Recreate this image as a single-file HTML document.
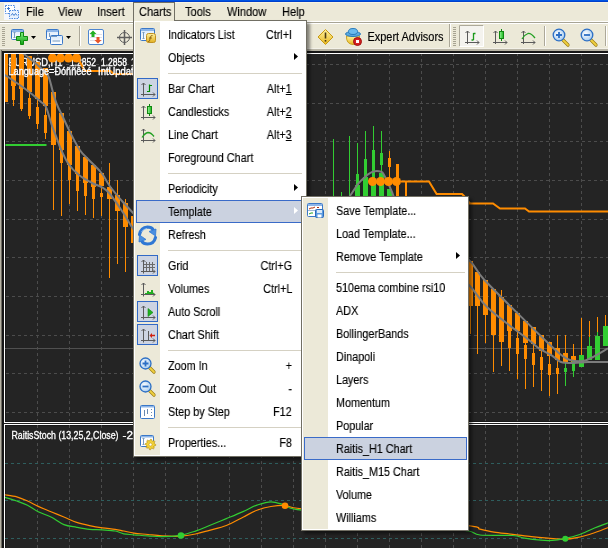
<!DOCTYPE html>
<html><head><meta charset="utf-8">
<style>
*{margin:0;padding:0;box-sizing:border-box}
html,body{width:608px;height:548px;overflow:hidden;background:#ECE9D8;font-family:"Liberation Sans",sans-serif;font-size:11px;color:#000}
.abs{position:absolute}
#chart{position:absolute;left:0;top:0;will-change:transform}
.abs svg, svg.abs{will-change:transform}
.mi{position:absolute;white-space:nowrap;line-height:13px;font-size:12px;-webkit-text-stroke:0.15px #000;transform:scaleX(0.92);transform-origin:0 0;will-change:transform}
.menu{position:absolute;background:#fff;border:1px solid #716F64;box-shadow:3px 3px 3px rgba(0,0,0,0.45)}
.menu .inner{position:absolute;left:0;top:0;right:0;bottom:0;border:1px solid #fff}
.strip{position:absolute;background:#ECE9D8}
.it{position:absolute;white-space:nowrap;line-height:13px;font-size:12px;-webkit-text-stroke:0.15px #000;transform:scaleX(0.9);transform-origin:0 0;will-change:transform}
.sc{position:absolute;white-space:nowrap;line-height:13px;text-align:right;font-size:12px;-webkit-text-stroke:0.15px #000;transform:scaleX(0.9);transform-origin:100% 0;will-change:transform}
.sep{position:absolute;height:1px;background:#D5D1C3}
.hl{position:absolute;background:#CBD2E0;border:1px solid #3A6BC8}
</style></head><body>
<svg id="chart" width="608" height="548">
<rect x="0" y="48" width="608" height="500" fill="#B6B2A3"/>
<rect x="1" y="50" width="1" height="498" fill="#6E6B62"/>
<rect x="2" y="51" width="606" height="497" fill="#161616"/>
<rect x="4" y="53" width="604" height="370" fill="#fff"/>
<rect x="5" y="54" width="603" height="368" fill="#181818"/>
<rect x="6" y="54" width="602" height="367" fill="#242424"/>
<rect x="4" y="423" width="604" height="1" fill="#1E1E1E"/>
<rect x="4" y="424" width="604" height="124" fill="#fff"/>
<rect x="5" y="425" width="603" height="123" fill="#181818"/>
<rect x="6" y="426" width="602" height="122" fill="#242424"/>
<defs><clipPath id="cm"><rect x="5" y="54" width="603" height="367"/></clipPath><clipPath id="ci"><rect x="5" y="425" width="603" height="123"/></clipPath></defs>
<g clip-path="url(#cm)"><line x1="37.5" y1="54" x2="37.5" y2="421" stroke="#4C4C4C" stroke-width="1" stroke-dasharray="3 3" stroke-dashoffset="1"/><line x1="69.5" y1="54" x2="69.5" y2="421" stroke="#4C4C4C" stroke-width="1" stroke-dasharray="3 3" stroke-dashoffset="1"/><line x1="101.5" y1="54" x2="101.5" y2="421" stroke="#4C4C4C" stroke-width="1" stroke-dasharray="3 3" stroke-dashoffset="1"/><line x1="133.5" y1="54" x2="133.5" y2="421" stroke="#4C4C4C" stroke-width="1" stroke-dasharray="3 3" stroke-dashoffset="1"/><line x1="165.5" y1="54" x2="165.5" y2="421" stroke="#4C4C4C" stroke-width="1" stroke-dasharray="3 3" stroke-dashoffset="1"/><line x1="197.5" y1="54" x2="197.5" y2="421" stroke="#4C4C4C" stroke-width="1" stroke-dasharray="3 3" stroke-dashoffset="1"/><line x1="229.5" y1="54" x2="229.5" y2="421" stroke="#4C4C4C" stroke-width="1" stroke-dasharray="3 3" stroke-dashoffset="1"/><line x1="261.5" y1="54" x2="261.5" y2="421" stroke="#4C4C4C" stroke-width="1" stroke-dasharray="3 3" stroke-dashoffset="1"/><line x1="293.5" y1="54" x2="293.5" y2="421" stroke="#4C4C4C" stroke-width="1" stroke-dasharray="3 3" stroke-dashoffset="1"/><line x1="325.5" y1="54" x2="325.5" y2="421" stroke="#4C4C4C" stroke-width="1" stroke-dasharray="3 3" stroke-dashoffset="1"/><line x1="357.5" y1="54" x2="357.5" y2="421" stroke="#4C4C4C" stroke-width="1" stroke-dasharray="3 3" stroke-dashoffset="1"/><line x1="389.5" y1="54" x2="389.5" y2="421" stroke="#4C4C4C" stroke-width="1" stroke-dasharray="3 3" stroke-dashoffset="1"/><line x1="421.5" y1="54" x2="421.5" y2="421" stroke="#4C4C4C" stroke-width="1" stroke-dasharray="3 3" stroke-dashoffset="1"/><line x1="453.5" y1="54" x2="453.5" y2="421" stroke="#4C4C4C" stroke-width="1" stroke-dasharray="3 3" stroke-dashoffset="1"/><line x1="485.5" y1="54" x2="485.5" y2="421" stroke="#4C4C4C" stroke-width="1" stroke-dasharray="3 3" stroke-dashoffset="1"/><line x1="517.5" y1="54" x2="517.5" y2="421" stroke="#4C4C4C" stroke-width="1" stroke-dasharray="3 3" stroke-dashoffset="1"/><line x1="549.5" y1="54" x2="549.5" y2="421" stroke="#4C4C4C" stroke-width="1" stroke-dasharray="3 3" stroke-dashoffset="1"/><line x1="581.5" y1="54" x2="581.5" y2="421" stroke="#4C4C4C" stroke-width="1" stroke-dasharray="3 3" stroke-dashoffset="1"/><line x1="5" y1="64.5" x2="608" y2="64.5" stroke="#4C4C4C" stroke-width="1" stroke-dasharray="3 3" stroke-dashoffset="5"/><line x1="5" y1="103.5" x2="608" y2="103.5" stroke="#4C4C4C" stroke-width="1" stroke-dasharray="3 3" stroke-dashoffset="5"/><line x1="5" y1="141.5" x2="608" y2="141.5" stroke="#4C4C4C" stroke-width="1" stroke-dasharray="3 3" stroke-dashoffset="5"/><line x1="5" y1="180.5" x2="608" y2="180.5" stroke="#4C4C4C" stroke-width="1" stroke-dasharray="3 3" stroke-dashoffset="5"/><line x1="5" y1="219.5" x2="608" y2="219.5" stroke="#4C4C4C" stroke-width="1" stroke-dasharray="3 3" stroke-dashoffset="5"/><line x1="5" y1="257.5" x2="608" y2="257.5" stroke="#4C4C4C" stroke-width="1" stroke-dasharray="3 3" stroke-dashoffset="5"/><line x1="5" y1="296.5" x2="608" y2="296.5" stroke="#4C4C4C" stroke-width="1" stroke-dasharray="3 3" stroke-dashoffset="5"/><line x1="5" y1="335.5" x2="608" y2="335.5" stroke="#4C4C4C" stroke-width="1" stroke-dasharray="3 3" stroke-dashoffset="5"/><line x1="5" y1="373.5" x2="608" y2="373.5" stroke="#4C4C4C" stroke-width="1" stroke-dasharray="3 3" stroke-dashoffset="5"/><line x1="5" y1="412.5" x2="608" y2="412.5" stroke="#4C4C4C" stroke-width="1" stroke-dasharray="3 3" stroke-dashoffset="5"/><line x1="5" y1="348.5" x2="608" y2="348.5" stroke="#505050" stroke-width="1"/><text x="8.5" y="66" textLength="54" fill="#fff" stroke="#fff" stroke-width="0.35" font-family="Liberation Sans" font-size="10" lengthAdjust="spacingAndGlyphs">EURUSD,H1</text><text x="70" y="66" textLength="26" fill="#fff" stroke="#fff" stroke-width="0.35" font-family="Liberation Sans" font-size="10" lengthAdjust="spacingAndGlyphs">1.2852</text><text x="101" y="66" textLength="26" fill="#fff" stroke="#fff" stroke-width="0.35" font-family="Liberation Sans" font-size="10" lengthAdjust="spacingAndGlyphs">1.2858</text><text x="131" y="66" textLength="26" fill="#fff" stroke="#fff" stroke-width="0.35" font-family="Liberation Sans" font-size="10" lengthAdjust="spacingAndGlyphs">1.2845</text><rect x="5.0" y="54" width="1" height="48" fill="#FF8C00"/><rect x="3.0" y="54" width="5" height="48" fill="#FF8C00"/><rect x="13.0" y="54" width="1" height="52" fill="#FF8C00"/><rect x="11.0" y="54" width="5" height="32" fill="#FF8C00"/><rect x="12.0" y="86" width="3" height="14" fill="#FF8C00"/><rect x="21.0" y="54" width="1" height="57" fill="#FF8C00"/><rect x="19.0" y="54" width="5" height="35" fill="#FF8C00"/><rect x="20.0" y="89" width="3" height="20" fill="#FF8C00"/><rect x="29.0" y="56" width="1" height="63" fill="#FF8C00"/><rect x="27.0" y="56" width="5" height="36" fill="#FF8C00"/><rect x="28.0" y="98" width="3" height="18" fill="#FF8C00"/><rect x="37.0" y="62" width="1" height="67" fill="#FF8C00"/><rect x="35.0" y="62" width="5" height="37" fill="#FF8C00"/><rect x="36.0" y="107" width="3" height="17" fill="#FF8C00"/><rect x="45.0" y="68" width="1" height="71" fill="#FF8C00"/><rect x="43.0" y="68" width="5" height="38" fill="#FF8C00"/><rect x="44.0" y="115" width="3" height="18" fill="#FF8C00"/><rect x="53.0" y="92" width="1" height="118" fill="#FF8C00"/><rect x="51.0" y="92" width="5" height="53" fill="#FF8C00"/><rect x="61.0" y="113" width="1" height="103" fill="#FF8C00"/><rect x="59.0" y="113" width="5" height="37" fill="#FF8C00"/><rect x="60.0" y="150" width="3" height="13" fill="#FF8C00"/><rect x="69.0" y="131" width="1" height="73" fill="#FF8C00"/><rect x="67.0" y="131" width="5" height="34" fill="#FF8C00"/><rect x="68.0" y="165" width="3" height="15" fill="#FF8C00"/><rect x="77.0" y="146" width="1" height="65" fill="#FF8C00"/><rect x="75.0" y="146" width="5" height="28" fill="#FF8C00"/><rect x="76.0" y="174" width="3" height="17" fill="#FF8C00"/><rect x="85.0" y="157" width="1" height="58" fill="#FF8C00"/><rect x="83.0" y="157" width="5" height="26" fill="#FF8C00"/><rect x="84.0" y="183" width="3" height="13" fill="#FF8C00"/><rect x="93.0" y="165" width="1" height="53" fill="#FF8C00"/><rect x="91.0" y="165" width="5" height="22" fill="#FF8C00"/><rect x="92.0" y="187" width="3" height="12" fill="#FF8C00"/><rect x="101.0" y="173" width="1" height="43" fill="#FF8C00"/><rect x="99.0" y="173" width="5" height="13" fill="#FF8C00"/><rect x="100.0" y="193" width="3" height="4" fill="#FF8C00"/><rect x="109.0" y="163" width="1" height="115" fill="#FF8C00"/><rect x="107.0" y="187" width="5" height="12" fill="#FF8C00"/><rect x="117.0" y="180" width="1" height="84" fill="#FF8C00"/><rect x="115.0" y="195" width="5" height="16" fill="#FF8C00"/><rect x="125.0" y="199" width="1" height="73" fill="#FF8C00"/><rect x="123.0" y="203" width="5" height="24" fill="#FF8C00"/><rect x="133.0" y="212" width="1" height="68" fill="#FF8C00"/><rect x="131.0" y="216" width="5" height="27" fill="#FF8C00"/><rect x="470.0" y="261" width="1" height="73" fill="#FF8C00"/><rect x="468.0" y="261" width="5" height="45" fill="#FF8C00"/><rect x="477.0" y="272" width="1" height="82" fill="#FF8C00"/><rect x="475.0" y="272" width="5" height="34" fill="#FF8C00"/><rect x="485.0" y="280" width="1" height="63" fill="#FF8C00"/><rect x="483.0" y="280" width="5" height="35" fill="#FF8C00"/><rect x="493.0" y="289" width="1" height="83" fill="#FF8C00"/><rect x="491.0" y="289" width="5" height="46" fill="#FF8C00"/><rect x="501.0" y="290" width="1" height="76" fill="#FF8C00"/><rect x="499.0" y="297" width="5" height="45" fill="#FF8C00"/><rect x="509.0" y="305" width="1" height="66" fill="#FF8C00"/><rect x="507.0" y="305" width="5" height="26" fill="#FF8C00"/><rect x="508.0" y="331" width="3" height="17" fill="#FF8C00"/><rect x="517.0" y="313" width="1" height="66" fill="#FF8C00"/><rect x="515.0" y="313" width="5" height="18" fill="#FF8C00"/><rect x="516.0" y="338" width="3" height="16" fill="#FF8C00"/><rect x="525.0" y="321" width="1" height="68" fill="#FF8C00"/><rect x="523.0" y="321" width="5" height="22" fill="#FF8C00"/><rect x="524.0" y="345" width="3" height="14" fill="#FF8C00"/><rect x="533.0" y="327" width="1" height="60" fill="#FF8C00"/><rect x="531.0" y="327" width="5" height="17" fill="#FF8C00"/><rect x="532.0" y="353" width="3" height="12" fill="#FF8C00"/><rect x="541.0" y="335" width="1" height="56" fill="#FF8C00"/><rect x="539.0" y="335" width="5" height="16" fill="#FF8C00"/><rect x="540.0" y="357" width="3" height="13" fill="#FF8C00"/><rect x="549.0" y="342" width="1" height="54" fill="#FF8C00"/><rect x="547.0" y="342" width="5" height="14" fill="#FF8C00"/><rect x="548.0" y="364" width="3" height="11" fill="#FF8C00"/><rect x="557.0" y="335" width="1" height="59" fill="#FF8C00"/><rect x="555.0" y="348" width="5" height="12" fill="#FF8C00"/><rect x="556.0" y="368" width="3" height="6" fill="#FF8C00"/><rect x="565.0" y="335" width="1" height="27" fill="#FF8C00"/><rect x="563.0" y="353" width="5" height="9" fill="#FF8C00"/><rect x="565.0" y="362" width="1" height="24" fill="#32CD32"/><rect x="564.0" y="368" width="3" height="4" fill="#32CD32"/><rect x="573.0" y="344" width="1" height="18" fill="#FF8C00"/><rect x="571.0" y="356" width="5" height="6" fill="#FF8C00"/><rect x="573.0" y="362" width="1" height="15" fill="#32CD32"/><rect x="572.0" y="360" width="3" height="11" fill="#32CD32"/><rect x="581.0" y="318" width="1" height="37" fill="#FF8C00"/><rect x="579.0" y="355" width="5" height="12" fill="#32CD32"/><rect x="589.0" y="321" width="1" height="16" fill="#FF8C00"/><rect x="589.0" y="337" width="1" height="9" fill="#32CD32"/><rect x="587.0" y="346" width="5" height="14" fill="#32CD32"/><rect x="597.0" y="317" width="1" height="15" fill="#FF8C00"/><rect x="597.0" y="332" width="1" height="4" fill="#32CD32"/><rect x="595.0" y="336" width="5" height="24" fill="#32CD32"/><rect x="605.0" y="315" width="1" height="11" fill="#FF8C00"/><rect x="603.0" y="326" width="5" height="20" fill="#32CD32"/><rect x="333.0" y="139" width="1" height="58" fill="#32CD32"/><rect x="341.0" y="192" width="1" height="5" fill="#32CD32"/><rect x="349.0" y="136" width="1" height="61" fill="#32CD32"/><rect x="357.0" y="143" width="1" height="54" fill="#32CD32"/><rect x="356.0" y="174" width="3" height="23" fill="#32CD32"/><rect x="355.0" y="185" width="5" height="12" fill="#32CD32"/><rect x="365.0" y="131" width="1" height="66" fill="#32CD32"/><rect x="364.0" y="159" width="3" height="38" fill="#32CD32"/><rect x="363.0" y="177" width="5" height="20" fill="#32CD32"/><rect x="373.0" y="126" width="1" height="71" fill="#32CD32"/><rect x="372.0" y="150" width="3" height="47" fill="#32CD32"/><rect x="371.0" y="184" width="5" height="13" fill="#32CD32"/><rect x="381.0" y="131" width="1" height="66" fill="#32CD32"/><rect x="380.0" y="153" width="3" height="12" fill="#32CD32"/><rect x="379.0" y="173" width="5" height="24" fill="#32CD32"/><rect x="389.0" y="151" width="1" height="29" fill="#FF8C00"/><rect x="388.0" y="158" width="3" height="9" fill="#FF8C00"/><rect x="387.0" y="189" width="5" height="8" fill="#32CD32"/><rect x="396.0" y="164" width="3" height="33" fill="#FF8C00"/><rect x="405.0" y="181" width="2" height="16" fill="#FF8C00"/><path d="M20,50 C20.7,50.7 21.7,52.0 24,54 C26.3,56.0 30.6,59.1 34,62 C37.4,64.9 41.8,68.8 44.2,71.3 C46.7,73.8 47.0,72.8 48.7,77 C50.4,81.2 52.7,91.8 54.2,96.8 C55.8,101.8 56.6,103.8 58,107 C59.4,110.2 60.3,111.6 62.4,116 C64.5,120.4 67.8,127.7 70.7,133.4 C73.6,139.1 76.9,145.7 79.8,150 C82.7,154.3 84.8,155.7 88,159 C91.2,162.3 96.2,167.1 98.7,169.8 C101.2,172.5 101.2,172.3 103,175 C104.8,177.7 107.5,182.8 109.7,186 C111.9,189.2 114.0,191.5 116,194 C118.0,196.5 119.0,197.7 122,201 C125.0,204.3 129.3,208.8 134,214 C138.7,219.2 147.3,229.0 150,232" fill="none" stroke="#7C7C7C" stroke-width="2"/><path d="M0,72 C0.8,72.5 0.7,72.1 5,75 C9.3,77.9 20.1,85.1 26,89.5 C31.9,93.9 37.2,98.5 40.5,101.4 C43.8,104.3 44.2,103.2 46,107 C47.8,110.8 49.7,118.9 51.5,124.2 C53.3,129.5 55.6,135.0 57,138.8 C58.4,142.6 58.2,142.9 60,147 C61.8,151.1 64.8,158.5 68,163.2 C71.2,167.9 75.0,171.7 79,175 C83.0,178.3 88.2,180.9 92,183 C95.8,185.1 99.0,185.5 102,187.3 C105.0,189.1 106.5,189.8 110,194 C113.5,198.2 119.0,206.5 123,212.5 C127.0,218.5 129.5,223.8 134,230 C138.5,236.2 147.3,246.7 150,250" fill="none" stroke="#7C7C7C" stroke-width="2"/><path d="M440,240 C444.8,243.3 461.7,253.4 469,260 C476.3,266.6 474.8,269.6 484,279.5 C493.2,289.4 513.7,309.4 524,319.6 C534.3,329.9 539.8,335.1 546,341 C552.2,346.9 557.0,351.6 561,354.8 C565.0,358.0 566.3,359.0 570,360 C573.7,361.0 579.3,361.4 583,361 C586.7,360.6 587.8,359.6 592,357.5 C596.2,355.4 605.3,349.9 608,348.4" fill="none" stroke="#7C7C7C" stroke-width="2"/><path d="M440,260 C444.8,264.2 461.0,277.0 469,285 C477.0,293.0 478.2,298.9 488,308 C497.8,317.1 519.5,332.6 528,339.3 C536.5,346.0 535.0,345.7 539,348.4 C543.0,351.1 548.3,353.4 552,355.7 C555.7,358.0 557.3,360.8 561,362 C564.7,363.2 569.5,363.0 574,363 C578.5,363.0 582.3,362.2 588,362 C593.7,361.8 604.7,362.0 608,362" fill="none" stroke="#7C7C7C" stroke-width="2"/><path d="M345,203 C346.2,201.3 349.8,196.2 352,193 C354.2,189.8 355.8,186.8 358,184 C360.2,181.2 363.0,178.5 365.5,176.4 C368.0,174.3 370.2,172.5 372.8,171.7 C375.4,170.9 379.1,171.1 381,171.7 C382.9,172.3 382.4,171.9 384.2,175.3 C386.0,178.7 390.0,187.1 392,192 C394.0,196.9 395.3,202.8 396,205" fill="none" stroke="#7C7C7C" stroke-width="2"/><rect x="5.5" y="144" width="41" height="2" fill="#32CD32"/><polyline points="469,203.5 493,203.5 500,208.5 525,208.5 529,211.5 608,211.5" fill="none" stroke="#FF8C00" stroke-width="2" stroke-linejoin="miter"/><polyline points="401,181.5 429,181.5 436.6,194 462,194 464,196 470,203.5" fill="none" stroke="#FF8C00" stroke-width="2" stroke-linejoin="miter"/><polyline points="79.5,61 84.7,71 110.6,71 113.6,74 134,74 160,74" fill="none" stroke="#FF8C00" stroke-width="2" stroke-linejoin="miter"/><circle cx="52.5" cy="58" r="4.5" fill="#FF8C00"/><circle cx="60.5" cy="58" r="4.5" fill="#FF8C00"/><circle cx="68.5" cy="58" r="4.5" fill="#FF8C00"/><circle cx="76.5" cy="58" r="4.5" fill="#FF8C00"/><circle cx="372.5" cy="181.5" r="4.5" fill="#FF8C00"/><circle cx="380.5" cy="181.5" r="4.5" fill="#FF8C00"/><circle cx="388.5" cy="181.5" r="4.5" fill="#FF8C00"/><circle cx="396.5" cy="181.5" r="4.5" fill="#FF8C00"/><text x="8.5" y="75" textLength="83" fill="#fff" stroke="#fff" stroke-width="0.35" font-family="Liberation Sans" font-size="10" lengthAdjust="spacingAndGlyphs">Language=Đóññêèé</text><text x="98" y="75" textLength="41" fill="#fff" stroke="#fff" stroke-width="0.35" font-family="Liberation Sans" font-size="10" lengthAdjust="spacingAndGlyphs">IntUpdate</text></g>
<g clip-path="url(#ci)"><line x1="37.5" y1="425" x2="37.5" y2="548" stroke="#4C4C4C" stroke-width="1" stroke-dasharray="3 3"/><line x1="69.5" y1="425" x2="69.5" y2="548" stroke="#4C4C4C" stroke-width="1" stroke-dasharray="3 3"/><line x1="101.5" y1="425" x2="101.5" y2="548" stroke="#4C4C4C" stroke-width="1" stroke-dasharray="3 3"/><line x1="133.5" y1="425" x2="133.5" y2="548" stroke="#4C4C4C" stroke-width="1" stroke-dasharray="3 3"/><line x1="165.5" y1="425" x2="165.5" y2="548" stroke="#4C4C4C" stroke-width="1" stroke-dasharray="3 3"/><line x1="197.5" y1="425" x2="197.5" y2="548" stroke="#4C4C4C" stroke-width="1" stroke-dasharray="3 3"/><line x1="229.5" y1="425" x2="229.5" y2="548" stroke="#4C4C4C" stroke-width="1" stroke-dasharray="3 3"/><line x1="261.5" y1="425" x2="261.5" y2="548" stroke="#4C4C4C" stroke-width="1" stroke-dasharray="3 3"/><line x1="293.5" y1="425" x2="293.5" y2="548" stroke="#4C4C4C" stroke-width="1" stroke-dasharray="3 3"/><line x1="325.5" y1="425" x2="325.5" y2="548" stroke="#4C4C4C" stroke-width="1" stroke-dasharray="3 3"/><line x1="357.5" y1="425" x2="357.5" y2="548" stroke="#4C4C4C" stroke-width="1" stroke-dasharray="3 3"/><line x1="389.5" y1="425" x2="389.5" y2="548" stroke="#4C4C4C" stroke-width="1" stroke-dasharray="3 3"/><line x1="421.5" y1="425" x2="421.5" y2="548" stroke="#4C4C4C" stroke-width="1" stroke-dasharray="3 3"/><line x1="453.5" y1="425" x2="453.5" y2="548" stroke="#4C4C4C" stroke-width="1" stroke-dasharray="3 3"/><line x1="485.5" y1="425" x2="485.5" y2="548" stroke="#4C4C4C" stroke-width="1" stroke-dasharray="3 3"/><line x1="517.5" y1="425" x2="517.5" y2="548" stroke="#4C4C4C" stroke-width="1" stroke-dasharray="3 3"/><line x1="549.5" y1="425" x2="549.5" y2="548" stroke="#4C4C4C" stroke-width="1" stroke-dasharray="3 3"/><line x1="581.5" y1="425" x2="581.5" y2="548" stroke="#4C4C4C" stroke-width="1" stroke-dasharray="3 3"/><line x1="5" y1="463.5" x2="608" y2="463.5" stroke="#2E5E5E" stroke-width="1" stroke-dasharray="3 3"/><line x1="5" y1="500.5" x2="608" y2="500.5" stroke="#2E5E5E" stroke-width="1" stroke-dasharray="3 3"/><line x1="5" y1="538.5" x2="608" y2="538.5" stroke="#2E5E5E" stroke-width="1" stroke-dasharray="3 3"/><text x="11.5" y="439" textLength="107" fill="#fff" stroke="#fff" stroke-width="0.3" font-family="Liberation Sans" font-size="10" lengthAdjust="spacingAndGlyphs">RaitisStoch (13,25,2,Close)</text><text x="122.5" y="439" textLength="46" fill="#fff" stroke="#fff" stroke-width="0.3" font-family="Liberation Sans" font-size="10" lengthAdjust="spacingAndGlyphs">-20.8765</text><path d="M4,494.6 C6.1,495.0 12.9,495.7 16.8,496.8 C20.7,497.9 23.9,499.4 27.5,501 C31.1,502.6 34.3,504.6 38.2,506.4 C42.1,508.2 46.7,509.9 51,511.7 C55.3,513.5 59.6,515.2 63.9,517 C68.2,518.8 72.4,521.0 76.7,522.4 C81.0,523.8 85.2,524.7 89.5,525.6 C93.8,526.5 98.1,527.2 102.4,527.8 C106.7,528.4 111.7,528.8 115.2,529.3 C118.8,529.8 120.6,530.4 123.7,531 C126.8,531.6 129.9,532.5 134,533.1 C138.1,533.7 143.3,534.0 148,534.5 C152.7,535.0 156.7,535.6 162,535.9 C167.3,536.2 174.5,536.5 180.1,536.2 C185.7,535.9 190.6,535.0 195.5,534 C200.4,533.0 204.4,531.7 209.5,530.3 C214.6,528.9 220.7,527.7 226.3,525.5 C231.9,523.3 237.9,519.8 243,517.2 C248.1,514.7 252.3,512.0 257,510.2 C261.7,508.4 266.3,507.3 271,506.5 C275.7,505.7 279.9,505.0 285,505.4 C290.1,505.8 286.0,507.2 301.8,508.8 C317.6,510.4 352.2,512.2 380,515 C407.8,517.8 451.6,523.3 468.3,525.7 C485.0,528.1 475.7,528.1 480,529.2 C484.3,530.3 488.6,531.4 494,532.2 C499.4,533.1 506.5,533.5 512.7,534.3 C518.9,535.0 525.5,536.1 531.4,536.7 C537.2,537.3 542.3,537.7 547.8,538.1 C553.2,538.5 559.0,539.4 564.1,539.3 C569.2,539.2 573.0,538.5 578.1,537.4 C583.2,536.3 589.5,534.3 594.5,532.7 C599.5,531.1 605.8,528.5 608,527.6" fill="none" stroke="#FF8C00" stroke-width="1.2"/><path d="M4,497.2 C6.1,497.8 12.9,499.6 16.8,501 C20.7,502.4 23.9,503.5 27.5,505.3 C31.1,507.1 34.3,509.8 38.2,511.7 C42.1,513.6 46.7,514.9 51,517 C55.3,519.1 59.6,522.9 63.9,524.6 C68.2,526.3 72.4,526.5 76.7,527.3 C81.0,528.1 85.2,528.9 89.5,529.3 C93.8,529.7 98.1,529.6 102.4,529.9 C106.7,530.2 111.7,530.4 115.2,531 C118.8,531.6 120.6,533.2 123.7,533.8 C126.8,534.4 129.9,534.4 134,534.8 C138.1,535.1 143.3,535.6 148,535.9 C152.7,536.2 156.7,536.8 162,536.7 C167.3,536.6 174.5,536.2 180.1,535.3 C185.7,534.4 190.6,532.7 195.5,531.1 C200.4,529.5 204.4,527.6 209.5,525.5 C214.6,523.4 220.7,520.9 226.3,518.6 C231.9,516.3 237.9,513.9 243,511.6 C248.1,509.4 252.3,506.7 257,505.1 C261.7,503.5 266.3,501.8 271,501.8 C275.7,501.8 279.9,503.7 285,505.1 C290.1,506.5 282.6,507.9 301.8,510.2 C321.0,512.5 377.0,516.4 400,519 C423.0,521.6 428.5,524.0 440,526 C451.5,528.0 462.3,529.5 469,531 C475.7,532.5 472.7,534.2 480,535 C487.3,535.8 505.3,535.0 512.7,535.5 C520.1,536.0 519.7,537.3 524.4,538.1 C529.1,538.9 536.1,539.8 540.8,540.2 C545.5,540.6 548.5,540.7 552.4,540.4 C556.3,540.1 559.8,539.5 564.1,538.6 C568.4,537.7 573.0,536.8 578.1,535 C583.2,533.2 589.5,530.0 594.5,528 C599.5,526.0 605.8,523.8 608,522.9" fill="none" stroke="#32CD32" stroke-width="1.2"/><circle cx="181" cy="535.5" r="3.3" fill="#32CD32"/><circle cx="285" cy="505.8" r="3.3" fill="#FF8C00"/><circle cx="565.3" cy="538.8" r="3" fill="#32CD32"/></g>

</svg>
<svg class="abs" style="left:0;top:0" width="608" height="50">
<defs>
 <linearGradient id="gplus" x1="0" y1="0" x2="0" y2="1"><stop offset="0" stop-color="#7FF07F"/><stop offset="1" stop-color="#10A010"/></linearGradient>
 <linearGradient id="gwin" x1="0" y1="0" x2="0" y2="1"><stop offset="0" stop-color="#D8E8FA"/><stop offset="1" stop-color="#FFFFFF"/></linearGradient>
 <radialGradient id="glens" cx="0.4" cy="0.4" r="0.6"><stop offset="0" stop-color="#FFFFFF"/><stop offset="1" stop-color="#A9CDEF"/></radialGradient>
 <linearGradient id="gyel" x1="0" y1="0" x2="0" y2="1"><stop offset="0" stop-color="#FFF2A0"/><stop offset="1" stop-color="#E8B820"/></linearGradient>
 <linearGradient id="gcandle" x1="0" y1="0" x2="1" y2="0"><stop offset="0" stop-color="#9AF59A"/><stop offset="1" stop-color="#17B517"/></linearGradient>
</defs>
<!-- frame lines -->
<rect x="0" y="48" width="608" height="1" fill="#F3F1E8"/>
<rect x="0" y="49" width="608" height="1" fill="#B9B5A6"/>
<rect x="0" y="50" width="608" height="1" fill="#77746A"/>
<!-- grip 1 -->
<g fill="#A7A392">
 <rect x="2" y="27" width="3" height="1"/><rect x="2" y="29" width="3" height="1"/><rect x="2" y="31" width="3" height="1"/>
 <rect x="2" y="33" width="3" height="1"/><rect x="2" y="35" width="3" height="1"/><rect x="2" y="37" width="3" height="1"/>
 <rect x="2" y="39" width="3" height="1"/><rect x="2" y="41" width="3" height="1"/><rect x="2" y="43" width="3" height="1"/>
 <rect x="2" y="45" width="3" height="1"/>
</g>
<!-- new chart icon -->
<rect x="11.5" y="29.5" width="12" height="10" rx="1" fill="url(#gwin)" stroke="#3A78C8"/>
<rect x="12" y="30" width="11" height="2" fill="#8DB5E8"/>
<path d="M14.5 32 V38 M13.5 33 L14.5 32 L15.5 33 M13.5 37 L14.5 38 L15.5 37" stroke="#7A9CC0" fill="none"/>
<path d="M20.5 32.5 h3 v4 h4 v4 h-4 v4 h-3 v-4 h-4 v-4 h4 z" fill="url(#gplus)" stroke="#0E8A0E"/>
<path d="M31 36 h5 l-2.5 3 z" fill="#000"/>
<!-- profiles icon -->
<rect x="46.5" y="29.5" width="12" height="10" rx="1" fill="url(#gwin)" stroke="#3A78C8"/>
<rect x="47" y="30" width="11" height="2" fill="#8DB5E8"/>
<rect x="50.5" y="35.5" width="12" height="9" rx="1" fill="url(#gwin)" stroke="#3A78C8"/>
<path d="M49.5 33 V37 M49.5 36.5 H57 M52.5 41 H60" stroke="#7A9CC0" fill="none"/>
<path d="M66 36 h5 l-2.5 3 z" fill="#000"/>
<!-- separator -->
<rect x="79" y="26" width="1" height="20" fill="#ACA899"/>
<rect x="80" y="26" width="1" height="20" fill="#fff"/>
<!-- market watch -->
<rect x="88.5" y="29.5" width="15" height="15" rx="1.5" fill="#fff" stroke="#4E86D0"/>
<path d="M90 34.5 H102 M90 37.5 H102 M90 40.5 H102" stroke="#E0E0E8"/>
<path d="M93 30.5 l3.5 3.5 h-2 v3 h-3 v-3 h-2 z" fill="#22B022"/>
<path d="M98 43.5 l3.5 -3.5 h-2 v-3 h-3 v3 h-2 z" fill="#E8552A"/>
<!-- crosshair -->
<g stroke="#5E5E5E" fill="none">
 <circle cx="124.5" cy="37.5" r="5"/>
 <path d="M124.5 30 V45 M117 37.5 H132" stroke-width="1.5"/>
</g>
<!-- warning -->
<path d="M325.5 29.5 L333 37 L325.5 44.5 L318 37 Z" fill="url(#gyel)" stroke="#C89A10" stroke-linejoin="round"/>
<path d="M325.5 32.5 V38.5" stroke="#4A3A10" stroke-width="1.6"/>
<rect x="324.7" y="40" width="1.6" height="1.6" fill="#4A3A10"/>
<!-- EA icon -->
<path d="M346.5 36 Q346 44 353 44.5 Q360 44 359.5 36 Z" fill="url(#gyel)" stroke="#C8A020"/>
<ellipse cx="353" cy="34" rx="7.5" ry="2.5" fill="#5AAAE0" stroke="#2A7ABA"/>
<ellipse cx="353" cy="31.5" rx="4.5" ry="3" fill="#6BBBEE" stroke="#2A7ABA"/>
<circle cx="357.5" cy="41.5" r="4" fill="#D42020" stroke="#A01010"/>
<rect x="356" y="40" width="3" height="3" fill="#fff"/>
<text x="367.5" y="41" font-family="Liberation Sans" font-size="12" fill="#000" stroke="#000" stroke-width="0.15" textLength="76" lengthAdjust="spacingAndGlyphs">Expert Advisors</text>
<!-- separator + grip 2 -->
<rect x="449" y="24" width="1" height="23" fill="#ACA899"/>
<rect x="450" y="24" width="1" height="23" fill="#fff"/>
<g fill="#A7A392">
 <rect x="453" y="27" width="3" height="1"/><rect x="453" y="29" width="3" height="1"/><rect x="453" y="31" width="3" height="1"/>
 <rect x="453" y="33" width="3" height="1"/><rect x="453" y="35" width="3" height="1"/><rect x="453" y="37" width="3" height="1"/>
 <rect x="453" y="39" width="3" height="1"/><rect x="453" y="41" width="3" height="1"/><rect x="453" y="43" width="3" height="1"/>
 <rect x="453" y="45" width="3" height="1"/>
</g>
<!-- selected button -->
<rect x="459" y="25" width="25" height="22" fill="#F4F3EE"/>
<path d="M459.5 46.5 V25.5 H483.5" stroke="#ACA899" fill="none"/>
<path d="M459.5 46.5 H483.5 V25.5" stroke="#fff" fill="none"/>
<!-- bar chart icon -->
<g stroke="#5A5A5A" fill="none">
 <path d="M467.5 31 V44 M465 42.5 H479"/>
 <path d="M465.5 33 l2 -2 l2 2 M477 40.5 l2 2 l-2 2"/>
</g>
<path d="M473.5 33 V40 M471.5 40 H473.5 M473.5 33.5 H475.5" stroke="#1A9A1A" stroke-width="1.3" fill="none"/>
<!-- candle icon -->
<g stroke="#5A5A5A" fill="none">
 <path d="M495.5 31 V44 M493 42.5 H507"/>
 <path d="M493.5 33 l2 -2 l2 2 M505 40.5 l2 2 l-2 2"/>
</g>
<path d="M501.5 29 V41" stroke="#118811"/>
<rect x="499.5" y="31.5" width="4" height="7" fill="url(#gcandle)" stroke="#118811"/>
<!-- line icon -->
<g stroke="#5A5A5A" fill="none">
 <path d="M523.5 31 V44 M521 42.5 H535"/>
 <path d="M521.5 33 l2 -2 l2 2 M533 40.5 l2 2 l-2 2"/>
</g>
<path d="M522 39 Q524 35 528 33.5 Q531 33 535 38" stroke="#22A022" stroke-width="1.3" fill="none"/>
<!-- separator -->
<rect x="544" y="26" width="1" height="20" fill="#ACA899"/>
<rect x="545" y="26" width="1" height="20" fill="#fff"/>
<!-- zoom in -->
<path d="M563 40 L568 45" stroke="#9A7A10" stroke-width="3.2" stroke-linecap="round"/>
<path d="M563 40 L568 45" stroke="#F0D040" stroke-width="1.8" stroke-linecap="round"/>
<circle cx="559" cy="35" r="5.8" fill="url(#glens)" stroke="#2C6FC5" stroke-width="1.3"/>
<path d="M559 32 V38 M556 35 H562" stroke="#2C6FC5" stroke-width="1.8"/>
<!-- zoom out -->
<path d="M591 40 L596 45" stroke="#9A7A10" stroke-width="3.2" stroke-linecap="round"/>
<path d="M591 40 L596 45" stroke="#F0D040" stroke-width="1.8" stroke-linecap="round"/>
<circle cx="587" cy="35" r="5.8" fill="url(#glens)" stroke="#2C6FC5" stroke-width="1.3"/>
<path d="M584 35 H590" stroke="#2C6FC5" stroke-width="1.8"/>
<!-- separator -->
<rect x="605" y="26" width="1" height="20" fill="#ACA899"/>
<rect x="606" y="26" width="1" height="20" fill="#fff"/>
<!-- app icon in menubar -->
<rect x="4" y="3" width="16" height="17" fill="#F6F8FC"/>
<rect x="5.5" y="5.5" width="9" height="8" fill="#fff" stroke="#4F8BE0" stroke-dasharray="1.5 1"/>
<rect x="9.5" y="10.5" width="9" height="8" fill="#EAF2FE" stroke="#4F8BE0" stroke-dasharray="1.5 1"/>
<path d="M7 8.5 h3 M8.5 7 v3" stroke="#2F6FC8" stroke-width="0.9"/>
<path d="M11 15.5 l1.5 -2 l1.5 2 l1.5 -2 l1.5 2" stroke="#2F6FC8" fill="none" stroke-width="0.9"/>
</svg>


<!-- title bar line -->
<div class="abs" style="left:0;top:0;width:608px;height:1px;background:#0054E3"></div>
<div class="abs" style="left:0;top:1px;width:608px;height:1px;background:#003FCC"></div>
<div class="abs" style="left:0;top:2px;width:608px;height:1px;background:#F8F3DF"></div>
<!-- menubar bottom line -->
<div class="abs" style="left:0;top:21px;width:608px;height:1px;background:#fff"></div>
<div class="abs" style="left:0;top:22px;width:608px;height:1px;background:#A7A495"></div>
<div class="abs" style="left:0;top:23px;width:608px;height:1px;background:#fff"></div>

<!-- menubar items -->
<div class="mi" style="left:26px;top:6px">File</div>
<div class="mi" style="left:58px;top:6px">View</div>
<div class="mi" style="left:97px;top:6px">Insert</div>
<div class="abs" style="left:133px;top:2px;width:42px;height:19px;border:1px solid #716F64;border-bottom:none;background:#ECE9D8"></div>
<div class="mi" style="left:139px;top:6px">Charts</div>
<div class="mi" style="left:185px;top:6px">Tools</div>
<div class="mi" style="left:227px;top:6px">Window</div>
<div class="mi" style="left:282px;top:6px">Help</div>

<!-- Charts menu -->
<div class="menu" style="left:133px;top:20px;width:174px;height:437px">
  <div class="inner"></div>
  <div class="strip" style="left:1px;top:1px;width:25px;height:433px"></div>
</div>
<div class="abs" style="left:134px;top:20px;width:40px;height:1px;background:#ECE9D8"></div>
<div class="it" style="left:168px;top:29px">Indicators List</div>
<div class="sc" style="right:316px;top:29px">Ctrl+I</div>
<div class="it" style="left:168px;top:52px">Objects</div>
<svg class="abs" style="left:294px;top:53px" width="5" height="8"><path d="M0 0 L4 3.5 L0 7Z" fill="#000"/></svg>
<div class="sep" style="left:168px;top:73px;width:134px"></div>
<div class="it" style="left:168px;top:83px">Bar Chart</div>
<div class="sc" style="right:316px;top:83px">Alt+<u>1</u></div>
<div class="it" style="left:168px;top:106px">Candlesticks</div>
<div class="sc" style="right:316px;top:106px">Alt+<u>2</u></div>
<div class="it" style="left:168px;top:129px">Line Chart</div>
<div class="sc" style="right:316px;top:129px">Alt+<u>3</u></div>
<div class="it" style="left:168px;top:152px">Foreground Chart</div>
<div class="sep" style="left:168px;top:173px;width:134px"></div>
<div class="it" style="left:168px;top:183px">Periodicity</div>
<svg class="abs" style="left:294px;top:184px" width="5" height="8"><path d="M0 0 L4 3.5 L0 7Z" fill="#000"/></svg>
<div class="hl" style="left:136px;top:200px;width:170px;height:23px"></div>
<div class="it" style="left:168px;top:206px">Template</div>
<svg class="abs" style="left:294px;top:207px" width="5" height="8"><path d="M0 0 L4 3.5 L0 7Z" fill="#fff"/></svg>
<div class="it" style="left:168px;top:229px">Refresh</div>
<div class="sep" style="left:168px;top:250px;width:134px"></div>
<div class="it" style="left:168px;top:260px">Grid</div>
<div class="sc" style="right:316px;top:260px">Ctrl+G</div>
<div class="it" style="left:168px;top:283px">Volumes</div>
<div class="sc" style="right:316px;top:283px">Ctrl+L</div>
<div class="it" style="left:168px;top:306px">Auto Scroll</div>
<div class="it" style="left:168px;top:329px">Chart Shift</div>
<div class="sep" style="left:168px;top:350px;width:134px"></div>
<div class="it" style="left:168px;top:360px">Zoom In</div>
<div class="sc" style="right:316px;top:360px">+</div>
<div class="it" style="left:168px;top:383px">Zoom Out</div>
<div class="sc" style="right:316px;top:383px">-</div>
<div class="it" style="left:168px;top:406px">Step by Step</div>
<div class="sc" style="right:316px;top:406px">F12</div>
<div class="sep" style="left:168px;top:427px;width:134px"></div>
<div class="it" style="left:168px;top:437px">Properties...</div>
<div class="sc" style="right:316px;top:437px">F8</div>

<!-- Template submenu -->
<div class="menu" style="left:301px;top:196px;width:168px;height:335px">
  <div class="inner"></div>
  <div class="strip" style="left:1px;top:1px;width:25px;height:331px"></div>
</div>
<div class="it" style="left:336px;top:205px">Save Template...</div>
<div class="it" style="left:336px;top:228px">Load Template...</div>
<div class="it" style="left:336px;top:251px">Remove Template</div>
<svg class="abs" style="left:456px;top:252px" width="5" height="8"><path d="M0 0 L4 3.5 L0 7Z" fill="#000"/></svg>
<div class="sep" style="left:336px;top:272px;width:129px"></div>
<div class="it" style="left:336px;top:282px">510ema combine rsi10</div>
<div class="it" style="left:336px;top:305px">ADX</div>
<div class="it" style="left:336px;top:328px">BollingerBands</div>
<div class="it" style="left:336px;top:351px">Dinapoli</div>
<div class="it" style="left:336px;top:374px">Layers</div>
<div class="it" style="left:336px;top:397px">Momentum</div>
<div class="it" style="left:336px;top:420px">Popular</div>
<div class="hl" style="left:304px;top:437px;width:163px;height:23px"></div>
<div class="it" style="left:336px;top:443px">Raitis_H1 Chart</div>
<div class="it" style="left:336px;top:466px">Raitis_M15 Chart</div>
<div class="it" style="left:336px;top:489px">Volume</div>
<div class="it" style="left:336px;top:512px">Williams</div>

<svg class="abs" style="left:0;top:0;pointer-events:none" width="608" height="548">
<defs>
 <linearGradient id="mwin" x1="0" y1="0" x2="0" y2="1"><stop offset="0" stop-color="#D8E8FA"/><stop offset="1" stop-color="#FFFFFF"/></linearGradient>
 <linearGradient id="myel" x1="0" y1="0" x2="0" y2="1"><stop offset="0" stop-color="#FFF0A0"/><stop offset="1" stop-color="#E2B020"/></linearGradient>
 <radialGradient id="mlens" cx="0.4" cy="0.4" r="0.6"><stop offset="0" stop-color="#FFFFFF"/><stop offset="1" stop-color="#A9CDEF"/></radialGradient>
 <linearGradient id="mcandle" x1="0" y1="0" x2="1" y2="0"><stop offset="0" stop-color="#9AF59A"/><stop offset="1" stop-color="#17B517"/></linearGradient>
 <g id="axes" stroke="#5A5A5A" fill="none">
  <path d="M0.5 0 V13.5 M-2 11.5 H12"/>
  <path d="M-1.5 2 l2 -2 l2 2 M10 9.5 l2 2 l-2 2"/>
 </g>
</defs>
<!-- Indicators list -->
<rect x="140.5" y="28.5" width="14" height="12" rx="1" fill="url(#mwin)" stroke="#3A78C8"/>
<rect x="141" y="29" width="13" height="2" fill="#8DB5E8"/>
<path d="M143.5 32 V39 M142.5 33 l1 -1 l1 1 M142.5 38 l1 1 l1 -1" stroke="#7A9CC0" fill="none"/>
<rect x="146.5" y="33.5" width="9" height="9" rx="2" fill="url(#myel)" stroke="#C09020"/>
<path d="M152.5 35.5 Q151 35 150.5 37 L149.5 41 Q149 42 148 41.5 M149 38 H152" stroke="#8A6010" fill="none" stroke-width="0.9"/>
<!-- Bar chart (checked) -->
<rect x="137.5" y="78.5" width="20" height="20" fill="#CDD4E2" stroke="#3169C6"/>
<use href="#axes" x="143" y="83"/>
<path d="M149.5 84.5 V92 M147 91.5 H149.5 M149.5 85.5 H152" stroke="#008A00" stroke-width="1.2" fill="none"/>
<!-- Candlesticks -->
<use href="#axes" x="143" y="106"/>
<path d="M149.5 104 V116" stroke="#118811"/>
<rect x="147.5" y="106.5" width="4" height="7" fill="url(#mcandle)" stroke="#118811"/>
<!-- Line chart -->
<use href="#axes" x="143" y="129"/>
<path d="M142 137.5 Q145 133 148 132.5 Q151 132.5 154 136.5" stroke="#22A022" stroke-width="1.3" fill="none"/>
<!-- Refresh -->
<path d="M139.5 234.5 Q141 227.5 147.5 227 Q151.5 227 153 229.5" stroke="#2F77D4" stroke-width="3.2" fill="none" stroke-linecap="round"/>
<path d="M149 231.5 L156 229 L155.5 236 Z" fill="#4A8FE0" stroke="#2F77D4" stroke-width="0.8" stroke-linejoin="round"/>
<path d="M155.5 237.5 Q154 244 147.5 244 Q143.5 244 142 241.5" stroke="#2F77D4" stroke-width="3.2" fill="none" stroke-linecap="round"/>
<path d="M146 239.5 L139 242 L139.5 235 Z" fill="#4A8FE0" stroke="#2F77D4" stroke-width="0.8" stroke-linejoin="round"/>
<path d="M141.5 232 Q143 229 147 228.5" stroke="#9CC6F2" stroke-width="0.9" fill="none"/>
<!-- Grid (checked) -->
<rect x="137.5" y="255.5" width="20" height="20" fill="#CDD4E2" stroke="#3169C6"/>
<use href="#axes" x="143" y="260"/>
<path d="M146.5 262 V271 M149.5 262 V271 M152.5 262 V271 M144 264.5 H155 M144 267.5 H155" stroke="#6A6A6A" fill="none"/>
<!-- Volumes -->
<use href="#axes" x="143" y="283"/>
<path d="M145 293 h2 v-2 h2 v1 h2 v-2 h2 v3 h1 v1 h-9 z" fill="#22B022"/>
<!-- Auto scroll (checked) -->
<rect x="137.5" y="301.5" width="20" height="20" fill="#CDD4E2" stroke="#3169C6"/>
<use href="#axes" x="143" y="306"/>
<path d="M148 308.5 L153 312.5 L148 316.5 Z" fill="#20B020" stroke="#118811" stroke-width="0.6"/>
<!-- Chart shift (checked) -->
<rect x="137.5" y="324.5" width="20" height="20" fill="#CDD4E2" stroke="#3169C6"/>
<use href="#axes" x="143" y="329"/>
<path d="M148.5 331 V341" stroke="#5A5A5A"/>
<path d="M149.5 335.5 L152 333 V334.8 H155 V336.2 H152 V338 Z" fill="#D02010"/>
<!-- Zoom in -->
<path d="M148 366 L154 372" stroke="#9A7A10" stroke-width="3.2" stroke-linecap="round"/>
<path d="M148 366 L154 372" stroke="#F0D040" stroke-width="1.8" stroke-linecap="round"/>
<circle cx="145.5" cy="363.5" r="5.5" fill="url(#mlens)" stroke="#2C6FC5" stroke-width="1.3"/>
<path d="M145.5 360.5 V366.5 M142.5 363.5 H148.5" stroke="#2C6FC5" stroke-width="1.8"/>
<!-- Zoom out -->
<path d="M148 389 L154 395" stroke="#9A7A10" stroke-width="3.2" stroke-linecap="round"/>
<path d="M148 389 L154 395" stroke="#F0D040" stroke-width="1.8" stroke-linecap="round"/>
<circle cx="145.5" cy="386.5" r="5.5" fill="url(#mlens)" stroke="#2C6FC5" stroke-width="1.3"/>
<path d="M142.5 386.5 H148.5" stroke="#2C6FC5" stroke-width="1.8"/>
<!-- Step by step -->
<rect x="140.5" y="405.5" width="14" height="13" rx="1" fill="#fff" stroke="#3A78C8"/>
<rect x="141" y="406" width="13" height="1.5" fill="#8DB5E8"/>
<path d="M144.5 410 V416 M147.5 409 V414 M151.5 409 V410 M151.5 412 V413 M151.5 415 V416" stroke="#6A8AB0" fill="none"/>
<!-- Properties -->
<rect x="140.5" y="435.5" width="13" height="11" rx="1" fill="#fff" stroke="#3A78C8"/>
<rect x="141" y="436" width="12" height="1.5" fill="#8DB5E8"/>
<path d="M143.5 438 V445 M142.5 439 l1 -1 l1 1 M142.5 444 l1 1 l1 -1" stroke="#7A9CC0" fill="none"/>
<polygon points="155.70,444.50 155.60,445.51 154.10,445.99 153.74,446.67 154.18,448.18 153.39,448.82 151.99,448.10 151.26,448.33 150.50,449.70 149.49,449.60 149.01,448.10 148.33,447.74 146.82,448.18 146.18,447.39 146.90,445.99 146.67,445.26 145.30,444.50 145.40,443.49 146.90,443.01 147.26,442.33 146.82,440.82 147.61,440.18 149.01,440.90 149.74,440.67 150.50,439.30 151.51,439.40 151.99,440.90 152.67,441.26 154.18,440.82 154.82,441.61 154.10,443.01 154.33,443.74" fill="#F2D23A" stroke="#B8900E" stroke-width="0.7" stroke-linejoin="round"/><circle cx="150.5" cy="444.5" r="1.5" fill="#fff" stroke="#B8900E" stroke-width="0.5"/>
<!-- Save template (submenu) -->
<rect x="307.5" y="203.5" width="15" height="13" rx="1" fill="#fff" stroke="#3A78C8"/>
<rect x="308" y="204" width="14" height="2" fill="#8DB5E8"/>
<path d="M308 210.5 H322" stroke="#A0B8D8"/>
<path d="M309 209 l2 -1 h2 l2 -1 M317 207.5 h2" stroke="#B03010" stroke-width="1" fill="none"/>
<path d="M309 214 l2 -1 h2" stroke="#20A020" stroke-width="1" fill="none"/>
<rect x="315.5" y="209.5" width="8" height="8" rx="1" fill="#5A9AE0" stroke="#2A6ABA"/>
<rect x="317" y="210" width="5" height="3" fill="#D8E8F8"/>
<rect x="317.5" y="214.5" width="4" height="3" fill="#fff"/>
</svg>

</body></html>
